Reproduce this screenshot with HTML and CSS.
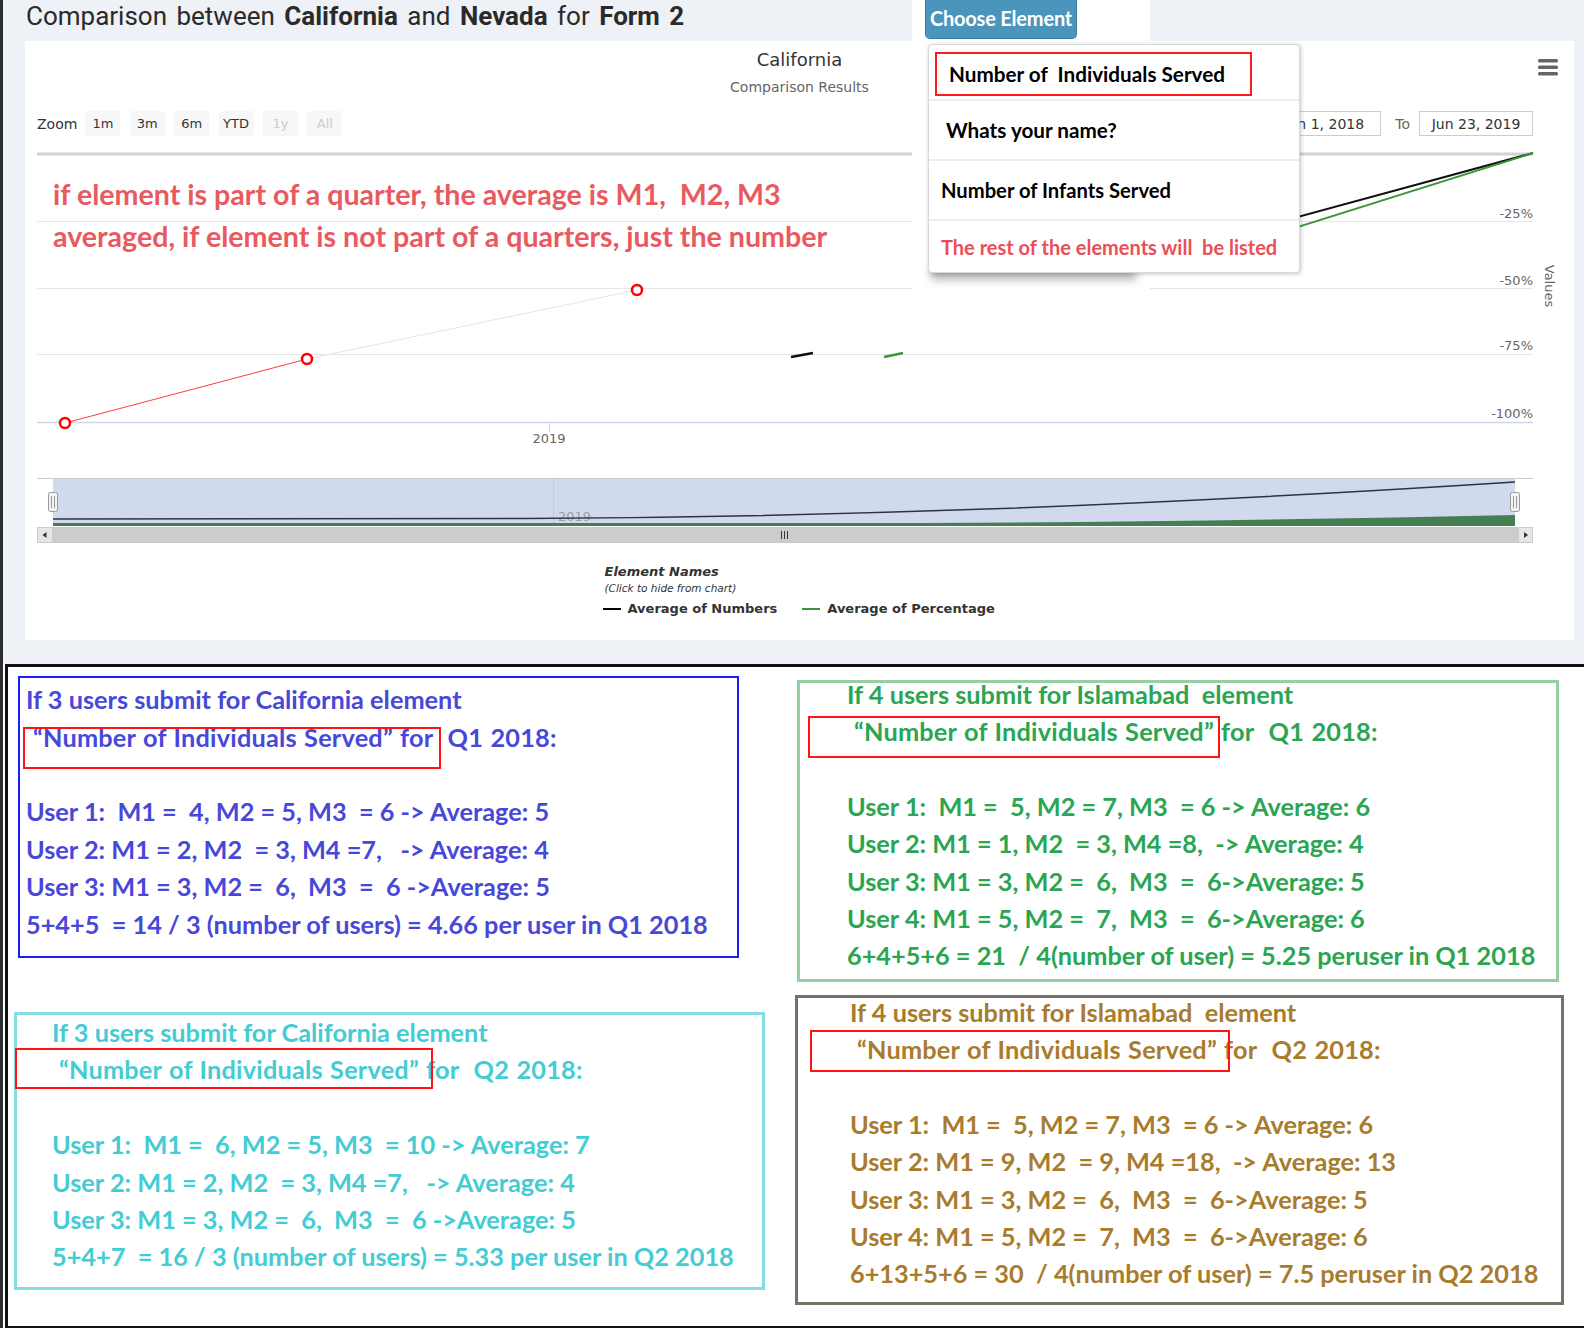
FILE: index.html
```html
<!DOCTYPE html>
<html lang="en">
<head>
<meta charset="utf-8">
<title>Comparison</title>
<link rel="stylesheet" href="styles.css">
</head>
<body>
<div class="page">
  <section class="top">
    <header class="title-row">
      <h1 class="title">Comparison between <b>California</b> and <b>Nevada</b> for <b>Form 2</b></h1>
    </header>
    <div class="panel">
      <svg class="chart-canvas" width="1549" height="599" viewBox="0 0 1549 599">
        <g stroke="#e6e6e6" stroke-width="1">
          <line x1="12" y1="180.5" x2="1508" y2="180.5"/>
          <line x1="12" y1="247.5" x2="1508" y2="247.5"/>
          <line x1="12" y1="313.5" x2="1508" y2="313.5"/>
        </g>
        <line x1="12" y1="113" x2="1508" y2="113" stroke="#d2d2d2" stroke-width="3"/>
        <line x1="12" y1="381.5" x2="1508" y2="381.5" stroke="#ccd6eb" stroke-width="1.5"/>
        <line x1="524.5" y1="381" x2="524.5" y2="391" stroke="#ccd6eb"/>
        <g class="axis-label" text-anchor="end">
          <text x="1508" y="176.5">-25%</text>
          <text x="1508" y="243.5">-50%</text>
          <text x="1508" y="308.5">-75%</text>
          <text x="1508" y="376.5">-100%</text>
        </g>
        <text class="axis-label" x="524" y="401.5" text-anchor="middle">2019</text>
        <text class="axis-label" transform="translate(1524 245) rotate(90)" text-anchor="middle" dominant-baseline="central">Values</text>

        <line x1="40" y1="382" x2="282" y2="318" stroke="#ff3b3b" stroke-width="1"/>
        <line x1="282" y1="318" x2="612" y2="249" stroke="#dfe9df" stroke-width="1"/>
        <g fill="#fff" stroke="#ff0000" stroke-width="2.5">
          <circle cx="40" cy="382" r="5"/>
          <circle cx="282" cy="318" r="5"/>
          <circle cx="612" cy="249" r="5"/>
        </g>
        <line x1="766" y1="316" x2="788" y2="312" stroke="#111" stroke-width="2.5"/>
        <line x1="859" y1="316" x2="878" y2="312" stroke="#3a963a" stroke-width="2.5"/>
        <line x1="1225" y1="189" x2="1508" y2="112" stroke="#111" stroke-width="2"/>
        <line x1="1225" y1="201" x2="1508" y2="112" stroke="#3a963a" stroke-width="2"/>

        <line x1="12" y1="437.5" x2="1508" y2="437.5" stroke="#cccccc"/>
        <rect x="28" y="438" width="1462" height="47" fill="#d1daed"/>
        <line x1="528.5" y1="438" x2="528.5" y2="485" stroke="#c3cbe0"/>
        <text class="nav-label" x="533" y="479.5">2019</text>
        <path d="M28 482 L900 482 C1100 481 1300 478 1490 474 L1490 485 L28 485 Z" fill="#457f51"/>
        <path d="M28 478 L500 477.5 C800 476 1100 466 1490 441" fill="none" stroke="#2e3342" stroke-width="1.5"/>
        <rect x="28" y="486" width="1465" height="16" fill="#cccccc"/>
        <rect x="12.5" y="486.5" width="15" height="15" fill="#e6e6e6" stroke="#cccccc"/>
        <path d="M17.5 494 L21.5 491 L21.5 497 Z" fill="#333"/>
        <rect x="1493.5" y="486.5" width="14" height="15" fill="#e6e6e6" stroke="#cccccc"/>
        <path d="M1503 494 L1499 491 L1499 497 Z" fill="#333"/>
        <g stroke="#333" stroke-width="1">
          <line x1="756.5" y1="490" x2="756.5" y2="498"/>
          <line x1="759.5" y1="490" x2="759.5" y2="498"/>
          <line x1="762.5" y1="490" x2="762.5" y2="498"/>
        </g>
        <g fill="#f2f2f2" stroke="#999">
          <rect x="23.5" y="451.5" width="9" height="19" rx="2"/>
          <rect x="1485.5" y="451.5" width="9" height="19" rx="2"/>
        </g>
        <g stroke="#999">
          <line x1="26.5" y1="455" x2="26.5" y2="467"/>
          <line x1="29.5" y1="455" x2="29.5" y2="467"/>
          <line x1="1488.5" y1="455" x2="1488.5" y2="467"/>
          <line x1="1491.5" y1="455" x2="1491.5" y2="467"/>
        </g>
      </svg>

      <div class="chart-head">
        <div class="chart-title">California</div>
        <div class="chart-sub">Comparison Results</div>
      </div>

      <div class="toolbar">
        <span class="zoom-label">Zoom</span>
        <span class="zbtn">1m</span>
        <span class="zbtn">3m</span>
        <span class="zbtn">6m</span>
        <span class="zbtn">YTD</span>
        <span class="zbtn off">1y</span>
        <span class="zbtn off">All</span>
        <div class="range">
          <span class="dinput">Jun 1, 2018</span>
          <span class="to">To</span>
          <span class="dinput">Jun 23, 2019</span>
        </div>
      </div>

      <div class="annot">
        <p>if element is part of a quarter, the average is M1,  M2, M3</p>
        <p>averaged, if element is not part of a quarters, just the number</p>
      </div>

      <div class="legend">
        <div class="legend-title">Element Names</div>
        <div class="legend-hint">(Click to hide from chart)</div>
        <div class="legend-items">
          <span class="legend-item"><span class="swatch"></span>Average of Numbers</span>
          <span class="legend-item"><span class="swatch green"></span>Average of Percentage</span>
        </div>
      </div>

      <span class="export" aria-label="Chart menu">
        <svg width="20" height="17" viewBox="0 0 20 17">
          <rect x="0" y="0" width="20" height="3.5" rx="1.5" fill="#666"/>
          <rect x="0" y="6.5" width="20" height="3.5" rx="1.5" fill="#666"/>
          <rect x="0" y="13" width="20" height="3.5" rx="1.5" fill="#666"/>
        </svg>
      </span>
    </div>

    <div class="dropwrap">
      <button class="choose" type="button">Choose Element</button>
      <span class="menu-shadow"></span>
    </div>
    <ul class="menu">
      <li class="menu-item first"><span class="picked">Number of  Individuals Served</span></li>
      <li class="menu-item second">Whats your name?</li>
      <li class="menu-item third">Number of Infants Served</li>
      <li class="menu-item rest">The rest of the elements will  be listed</li>
    </ul>
  </section>

  <section class="notes">
    <div class="col">
      <div class="box b1">
        <div class="lines">
          <div class="ln">If 3 users submit for California element</div>
          <div class="ln q">“Number of Individuals Served” for  Q1 2018:</div>
          <div class="ln"></div>
          <div class="ln">User 1:  M1 =  4, M2 = 5, M3  = 6 -&gt; Average: 5</div>
          <div class="ln">User 2: M1 = 2, M2  = 3, M4 =7,   -&gt; Average: 4</div>
          <div class="ln">User 3: M1 = 3, M2 =  6,  M3  =  6 -&gt;Average: 5</div>
          <div class="ln">5+4+5  = 14 / 3 (number of users) = 4.66 per user in Q1 2018</div>
        </div>
        <span class="redbox"></span>
      </div>
      <div class="box b3">
        <div class="lines">
          <div class="ln">If 3 users submit for California element</div>
          <div class="ln q">“Number of Individuals Served” for  Q2 2018:</div>
          <div class="ln"></div>
          <div class="ln">User 1:  M1 =  6, M2 = 5, M3  = 10 -&gt; Average: 7</div>
          <div class="ln">User 2: M1 = 2, M2  = 3, M4 =7,   -&gt; Average: 4</div>
          <div class="ln">User 3: M1 = 3, M2 =  6,  M3  =  6 -&gt;Average: 5</div>
          <div class="ln">5+4+7  = 16 / 3 (number of users) = 5.33 per user in Q2 2018</div>
        </div>
        <span class="redbox"></span>
      </div>
    </div>
    <div class="col">
      <div class="box b2">
        <div class="lines">
          <div class="ln">If 4 users submit for Islamabad  element</div>
          <div class="ln q">“Number of Individuals Served” for  Q1 2018:</div>
          <div class="ln"></div>
          <div class="ln">User 1:  M1 =  5, M2 = 7, M3  = 6 -&gt; Average: 6</div>
          <div class="ln">User 2: M1 = 1, M2  = 3, M4 =8,  -&gt; Average: 4</div>
          <div class="ln">User 3: M1 = 3, M2 =  6,  M3  =  6-&gt;Average: 5</div>
          <div class="ln">User 4: M1 = 5, M2 =  7,  M3  =  6-&gt;Average: 6</div>
          <div class="ln">6+4+5+6 = 21  / 4(number of user) = 5.25 peruser in Q1 2018</div>
        </div>
        <span class="redbox"></span>
      </div>
      <div class="box b4">
        <div class="lines">
          <div class="ln">If 4 users submit for Islamabad  element</div>
          <div class="ln q">“Number of Individuals Served” for  Q2 2018:</div>
          <div class="ln"></div>
          <div class="ln">User 1:  M1 =  5, M2 = 7, M3  = 6 -&gt; Average: 6</div>
          <div class="ln">User 2: M1 = 9, M2  = 9, M4 =18,  -&gt; Average: 13</div>
          <div class="ln">User 3: M1 = 3, M2 =  6,  M3  =  6-&gt;Average: 5</div>
          <div class="ln">User 4: M1 = 5, M2 =  7,  M3  =  6-&gt;Average: 6</div>
          <div class="ln">6+13+5+6 = 30  / 4(number of user) = 7.5 peruser in Q2 2018</div>
        </div>
        <span class="redbox"></span>
      </div>
    </div>
  </section>
</div>
</body>
</html>
```

FILE: styles.css
```css
* { box-sizing: border-box; }
html, body { margin: 0; padding: 0; }
body {
  width: 1584px;
  height: 1328px;
  overflow: hidden;
  background: #ffffff;
  font-family: "DejaVu Sans", sans-serif;
}
.page {
  position: relative;
  height: 1328px;
  border-left: 3px solid #2d2d2d;
  background: #ffffff;
}

/* ---------- top area ---------- */
.top {
  height: 664px;
  background: #eef1f6;
  padding: 0 10px 0 22px;
}
.title-row { height: 41px; }
.title {
  margin: 0;
  padding-left: 1px;
  font: 400 26px/33px Roboto, "Liberation Sans", sans-serif;
  word-spacing: 3px;
  color: #2a2a2a;
  white-space: nowrap;
}
.title b { font-weight: 700; }

.panel {
  position: relative;
  height: 599px;
  background: #ffffff;
  display: flex;
  flex-direction: column;
}
.chart-canvas { position: absolute; left: 0; top: 0; }
.axis-label { font-family: "DejaVu Sans", sans-serif; font-size: 13px; fill: #666666; }
.nav-label { font-family: "DejaVu Sans", sans-serif; font-size: 13px; fill: #a0a0a0; }

.chart-head {
  position: relative;
  text-align: center;
  padding-top: 8px;
}
.chart-title { font-size: 18px; line-height: 22px; color: #333333; }
.chart-sub { font-size: 14px; line-height: 18px; color: #666666; margin-top: 7px; }

.toolbar {
  position: relative;
  display: flex;
  align-items: center;
  height: 25px;
  margin-top: 15px;
  padding: 0 41px 0 12px;
}
.zoom-label { font-size: 14px; color: #333333; margin-right: 8px; }
.zbtn {
  width: 35px;
  height: 25px;
  margin-right: 9.4px;
  display: flex;
  align-items: center;
  justify-content: center;
  background: #f7f7f7;
  border-radius: 2px;
  font-size: 13px;
  color: #333333;
}
.zbtn.off { color: #cccccc; }
.range { margin-left: auto; display: flex; align-items: center; }
.dinput {
  width: 114px;
  height: 25px;
  border: 1px solid #cccccc;
  display: flex;
  align-items: center;
  justify-content: center;
  font-size: 14px;
  color: #333333;
  background: #ffffff;
}
.to { font-size: 14px; color: #666666; margin: 0 9px 0 14px; }

.annot {
  position: relative;
  margin: 37px 0 0 28px;
  font: 700 28.6px/42px Lato, sans-serif;
  color: #e85a60;
}
.annot p { margin: 0; white-space: pre; }

.legend {
  position: relative;
  margin-top: auto;
  margin-bottom: 22px;
  align-self: center;
  width: 394px;
  color: #333333;
}
.legend-title { font: italic 700 13px/16px "DejaVu Sans", sans-serif; padding-left: 2px; }
.legend-hint { font: italic 400 10.5px/14px "DejaVu Sans", sans-serif; padding-left: 2px; margin-top: 1px; }
.legend-items { display: flex; align-items: center; gap: 25px; height: 18px; margin-top: 5px; }
.legend-item { display: flex; align-items: center; gap: 7px; font: 700 13px/18px "DejaVu Sans", sans-serif; }
.swatch { width: 18px; height: 2px; background: #000000; }
.swatch.green { background: #3a963a; }

.export {
  position: absolute;
  right: 16px;
  top: 18px;
  width: 20px;
  height: 17px;
  display: block;
}
.export svg { display: block; }

/* ---------- dropdown ---------- */
.dropwrap {
  position: absolute;
  left: 909px;
  top: 0;
  width: 238px;
  height: 290px;
  background: #ffffff;
  overflow: hidden;
  z-index: 5;
}
.choose {
  display: block;
  margin: 0 0 0 13px;
  width: 152px;
  height: 39px;
  padding: 0 0 3px;
  background: #4b94bc;
  border: 1px solid #3b7ea5;
  border-top: 0;
  border-radius: 0 0 5px 5px;
  color: #ffffff;
  font: 700 20px/1 Lato, sans-serif;
  letter-spacing: -0.2px;
}
.menu-shadow {
  position: absolute;
  left: 19px;
  top: 258px;
  width: 205px;
  height: 14px;
  background: #ffffff;
  box-shadow: 0 8px 9px rgba(0, 0, 0, 0.28);
}
.menu {
  position: absolute;
  left: 925px;
  top: 44px;
  width: 372px;
  height: 229px;
  margin: 0;
  padding: 0;
  list-style: none;
  background: #ffffff;
  border: 1px solid #d8d8d8;
  border-radius: 4px;
  box-shadow: 1px 1px 4px rgba(0, 0, 0, 0.22);
  z-index: 6;
  font: 700 20.7px/1 Lato, sans-serif;
  color: #000000;
}
.menu-item { display: flex; align-items: center; white-space: pre; }
.menu-item + .menu-item { border-top: 2px solid #ececec; }
.menu-item.first { height: 54px; align-items: flex-start; padding: 7px 0 0 6px; }
.picked {
  display: flex;
  align-items: center;
  width: 317px;
  height: 44px;
  padding-left: 12px;
  border: 2px solid #ff1a1a;
}
.menu-item.second { height: 60px; padding-left: 17px; }
.menu-item.third { height: 60px; padding-left: 12px; font-size: 20.2px; }
.menu-item.rest { height: 53px; padding-left: 12px; color: #ea4e58; font-size: 20px; }

/* ---------- notes ---------- */
.notes {
  display: grid;
  grid-template-columns: 780px 1fr;
  height: 664px;
  margin-left: 2px;
  border-top: 3px solid #111111;
  border-left: 3px solid #111111;
  border-bottom: 2px solid #111111;
  background: #ffffff;
}
.col { display: flex; flex-direction: column; align-items: flex-start; }
.box {
  position: relative;
  font: 700 25.3px/37.4px Lato, sans-serif;
}
.ln { height: 37.4px; white-space: pre; }
.q { padding-left: 7px; letter-spacing: 0.2px; word-spacing: 1px; }
.redbox { position: absolute; border: 2px solid #ff1414; }

.b1 {
  margin: 9px 0 0 10px;
  width: 721px;
  height: 282px;
  border: 2px solid #1c1cff;
  padding: 3.3px 0 0 6px;
  color: #4848d8;
}
.b1 .redbox { left: 3px; top: 49px; width: 418px; height: 42px; }

.b3 {
  margin: 54px 0 0 6px;
  width: 751px;
  height: 278px;
  border: 3px solid #84dde1;
  padding: 0 0 0 35px;
  color: #43ccd4;
}
.b3 .lines { margin-top: -1px; }
.b3 .redbox { left: -2px; top: 33px; width: 418px; height: 41px; }

.b2 {
  margin: 13px 0 0 9px;
  width: 762px;
  height: 302px;
  border: 3px solid #97cfa5;
  padding: 0 0 0 47px;
  color: #2aa552;
}
.b2 .lines { margin-top: -7.4px; }
.b2 .redbox { left: 8px; top: 33px; width: 412px; height: 42px; }

.b4 {
  margin: 13px 0 0 7px;
  width: 769px;
  height: 310px;
  border: 3px solid #777068;
  padding: 0 0 0 52px;
  color: #a97b2c;
}
.b4 .lines { margin-top: -4.4px; }
.b4 .redbox { left: 12px; top: 32px; width: 420px; height: 42px; }
```
